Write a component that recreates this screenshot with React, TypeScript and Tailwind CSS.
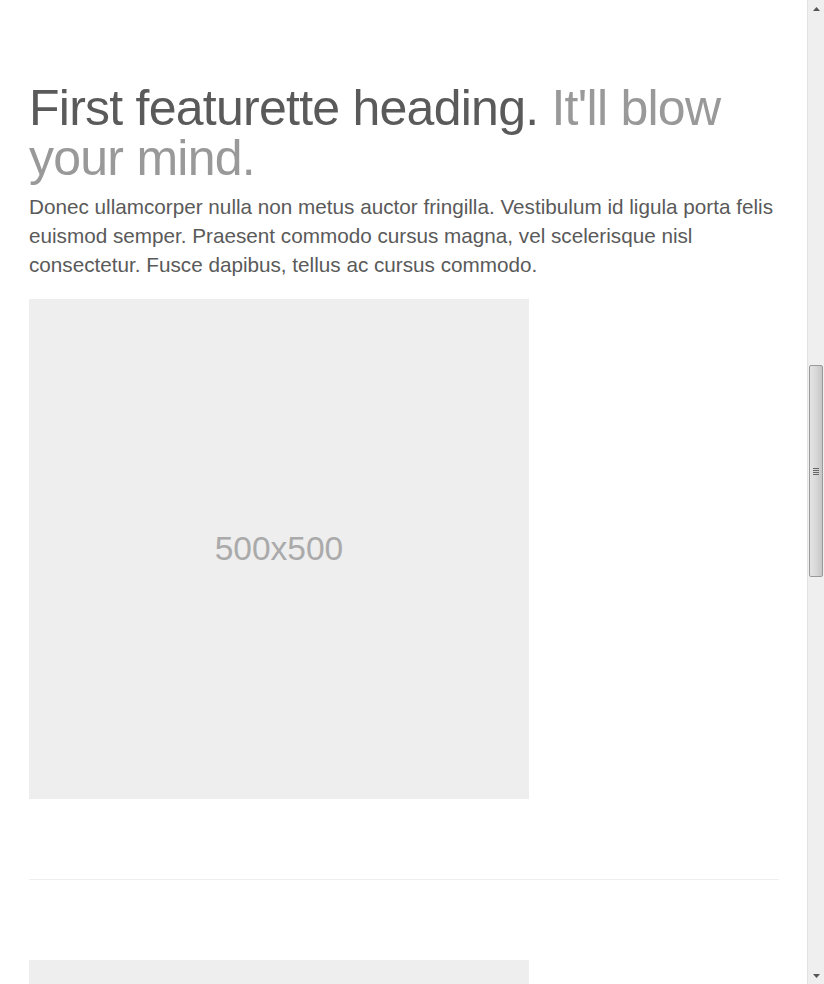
import React from 'react';

const Placeholder = ({ label }: { label?: string }) => (
  <div className="w-[500px] h-[500px] shrink-0 bg-[#eeeeee] flex items-center justify-center">
    {label && <span className="text-[33.5px] text-[#aaaaaa] leading-none">{label}</span>}
  </div>
);

const Scrollbar = () => (
  <div className="w-[17px] h-[984px] shrink-0 flex flex-col bg-[#efefef] border-l border-[#e2e2e2]">
    {/* up arrow */}
    <div className="h-[17px] flex items-center justify-center">
      <svg width="7" height="4" viewBox="0 0 7 4">
        <path d="M3.5 0 L7 4 L0 4 Z" fill="#555" />
      </svg>
    </div>
    <div className="h-[348px]" />
    {/* thumb */}
    <div className="mx-[1px] h-[212px] rounded-[2px] border border-[#9a9a9a] bg-gradient-to-r from-[#e4e4e4] via-[#d8d8d8] to-[#c6c6c6] flex flex-col items-center justify-center gap-[1px]">
      <div className="w-[6px] h-[1px] bg-[#666]" />
      <div className="w-[6px] h-[1px] bg-[#666]" />
      <div className="w-[6px] h-[1px] bg-[#666]" />
      <div className="w-[6px] h-[1px] bg-[#666]" />
    </div>
    <div className="flex-1" />
    <div className="h-[17px] flex items-center justify-center">
      <svg width="7" height="4" viewBox="0 0 7 4">
        <path d="M0 0 L7 0 L3.5 4 Z" fill="#555" />
      </svg>
    </div>
  </div>
);

export default function App() {
  return (
    <div className="flex h-[984px] overflow-hidden bg-white font-['Liberation_Sans',Arial,sans-serif]">
      <div className="flex-1 overflow-hidden pl-[29px] pt-[83px]">
        <div className="w-[750px]">
          <h2 className="text-[50px] leading-[50px] tracking-[-0.75px] text-[#5a5a5a] font-normal">
            First featurette heading. <span className="text-[#999999]">It'll blow your mind.</span>
          </h2>
          <p className="mt-[9px] text-[20.7px] leading-[29px] text-[#5a5a5a]">
            Donec ullamcorper nulla non metus auctor fringilla. Vestibulum id ligula porta felis euismod semper. Praesent commodo cursus magna, vel scelerisque nisl consectetur. Fusce dapibus, tellus ac cursus commodo.
          </p>
          <div className="mt-[20px]">
            <Placeholder label="500x500" />
          </div>
          <hr className="my-[80px] border-0 border-t border-[#eeeeee]" />
          <Placeholder />
        </div>
      </div>
      <Scrollbar />
    </div>
  );
}
